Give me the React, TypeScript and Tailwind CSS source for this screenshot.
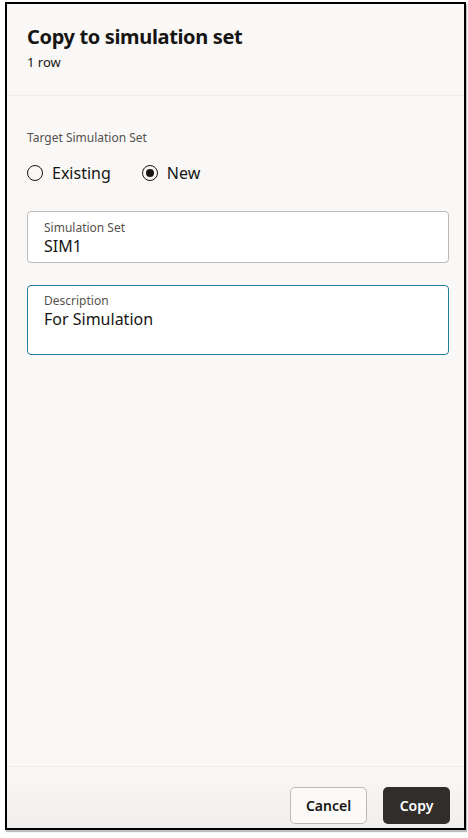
import React from 'react';

const font = { fontFamily: '"Noto Sans", "Open Sans", Arial, sans-serif' };

function Radio({ label, checked }: { label: string; checked?: boolean }) {
    return (
        <label className="flex items-center gap-[9px]">
            <span className="w-[16px] h-[16px] rounded-full border-[1.5px] border-[#161513] flex items-center justify-center">
                {checked && <span className="w-[8px] h-[8px] rounded-full bg-[#161513]" />}
            </span>
            <span className="text-[16px] text-[#161513]">{label}</span>
        </label>
    );
}

function Field({ label, value, focused }: { label: string; value: string; focused?: boolean }) {
    return (
        <div
            className={
                focused
                    ? 'rounded-[4px] border-[1.5px] border-[#227e9e] bg-white px-[16px] pt-[7px] h-[70px]'
                    : 'rounded-[4px] border border-[#bcb9b6] bg-white px-[16px] pt-[8px] h-[52px]'
            }
        >
            <div className="text-[12px] leading-[16px] text-[#56524e]">{label}</div>
            <div className="text-[16px] leading-[20px] text-[#161513]">{value}</div>
        </div>
    );
}

export default function App() {
    return (
        <div className="w-[468px] h-[838px] bg-white pt-[2px] pl-[5px]" style={font}>
            <div className="w-[461px] h-[828px] border-2 border-black bg-[#f9f8f6] flex flex-col shadow-[1px_2px_1px_rgba(0,0,0,0.25)]">
                <div className="pl-[20px] pt-[20px] h-[92px] border-b border-[#efedeb]">
                    <h1 className="text-[20px] leading-[26px] font-bold tracking-[-0.35px] text-[#161513]">Copy to simulation set</h1>
                    <div className="text-[13px] leading-[18px] mt-[3px] text-[#161513]">1 row</div>
                </div>
                <div className="flex-1 pl-[20px] pr-[15px] pt-[34px]">
                    <div className="text-[12px] leading-[16px] text-[#56524e]">Target Simulation Set</div>
                    <div className="flex items-center gap-[31px] mt-[15px]">
                        <Radio label="Existing" />
                        <Radio label="New" checked />
                    </div>
                    <div className="mt-[26px] flex flex-col gap-[22px]">
                        <Field label="Simulation Set" value="SIM1" />
                        <Field label="Description" value="For Simulation" focused />
                    </div>
                </div>
                <div className="border-t border-[#efedeb] h-[62px] flex items-start justify-end gap-[16px] pr-[14px] pt-[20px] bg-gradient-to-b from-[#f9f8f6] to-[#f1efed]">
                    <button className="h-[37px] w-[77px] rounded-[5px] border border-[#bcb9b6] bg-[#fbfaf9] text-[14px] font-semibold text-[#161513]">
                        Cancel
                    </button>
                    <button className="h-[37px] w-[67px] rounded-[5px] bg-[#312d2a] text-[14px] font-semibold text-white">
                        Copy
                    </button>
                </div>
            </div>
        </div>
    );
}
